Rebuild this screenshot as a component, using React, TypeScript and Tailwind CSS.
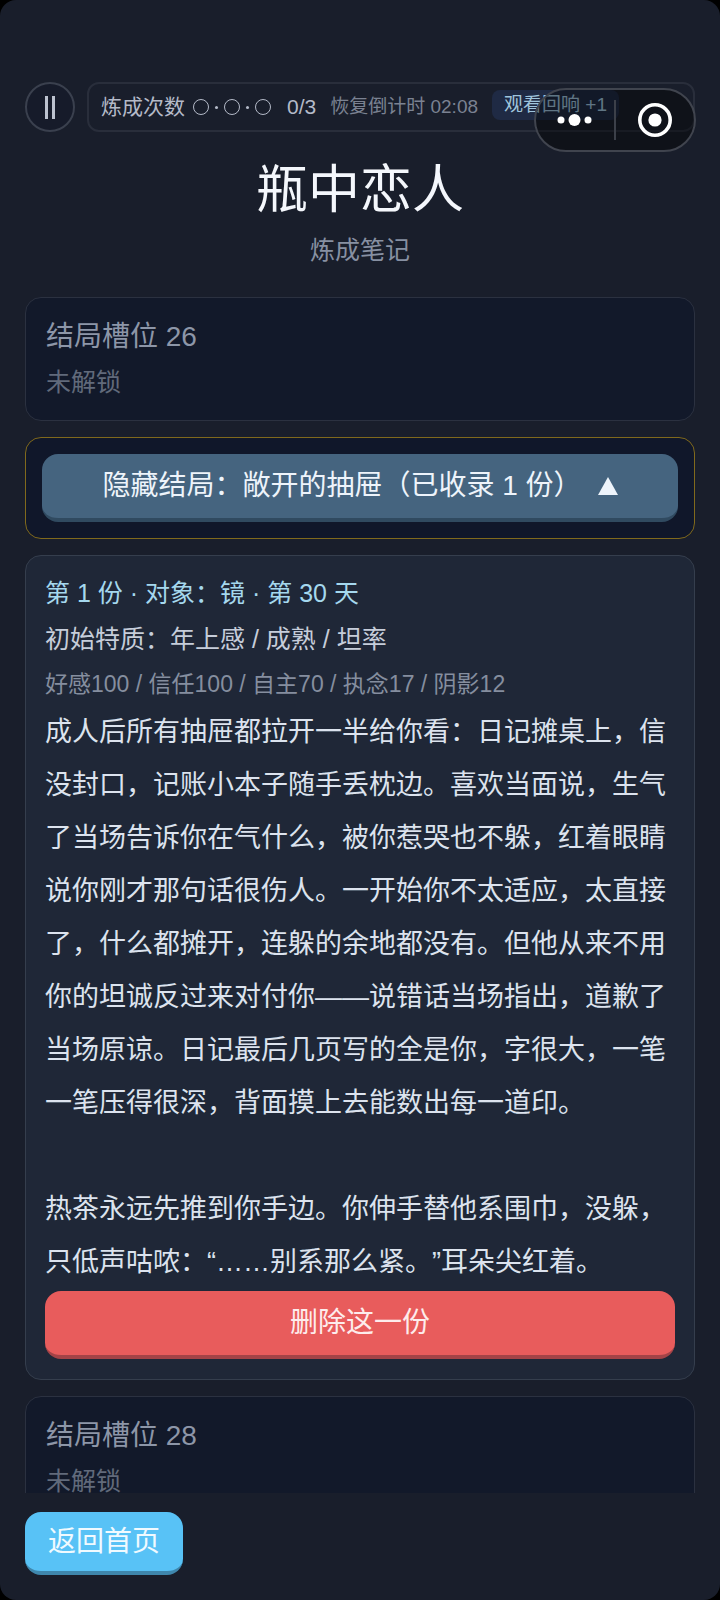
type Ending = {
  title: string;
  traits: string;
  stats: string;
  story: string;
};

const ending: Ending = {
  title: "第 1 份 · 对象：镜 · 第 30 天",
  traits: "初始特质：年上感 / 成熟 / 坦率",
  stats: "好感100 / 信任100 / 自主70 / 执念17 / 阴影12",
  story:
    "成人后所有抽屉都拉开一半给你看：日记摊桌上，信没封口，记账小本子随手丢枕边。喜欢当面说，生气了当场告诉你在气什么，被你惹哭也不躲，红着眼睛说你刚才那句话很伤人。一开始你不太适应，太直接了，什么都摊开，连躲的余地都没有。但他从来不用你的坦诚反过来对付你——说错话当场指出，道歉了当场原谅。日记最后几页写的全是你，字很大，一笔一笔压得很深，背面摸上去能数出每一道印。\n\n热茶永远先推到你手边。你伸手替他系围巾，没躲，只低声咕哝：“……别系那么紧。”耳朵尖红着。",
};

function StatusBar() {
  return (
    <div className="flex items-center gap-3 px-[25px]">
      <button
        type="button"
        aria-label="暂停"
        className="flex size-[50px] shrink-0 items-center justify-center gap-1 rounded-full border-2 border-[#3a404e] bg-[#161b2a]"
      >
        <span className="h-[23px] w-[3px] bg-[#bcc2cf]" />
        <span className="h-[23px] w-[3px] bg-[#bcc2cf]" />
      </button>
      <div className="flex h-[50px] min-w-0 flex-1 items-center overflow-hidden rounded-xl border-2 border-[#292e3b] pl-3 whitespace-nowrap">
        <span className="text-[21px] text-[#b4bac8]">炼成次数</span>
        <span className="ml-2 flex items-center gap-1.5">
          <Slot />
          <Dot />
          <Slot />
          <Dot />
          <Slot />
        </span>
        <span className="ml-4 text-[21px] text-[#b4bac8]">0/3</span>
        <span className="ml-[14px] text-[19px] text-[#7b8292]">恢复倒计时 02:08</span>
        <button
          type="button"
          className="mb-1 ml-[14px] h-[30px] rounded-lg bg-[#1f2a44] px-3 text-[19px] leading-[30px] text-[#9fc4dc]"
        >
          观看回响 +1
        </button>
      </div>
    </div>
  );
}

function Slot() {
  return <span className="size-4 rounded-full border border-[#b4bac8]" />;
}

function Dot() {
  return <span className="size-[3px] rounded-full bg-[#b4bac8]" />;
}

function Capsule() {
  return (
    <div className="absolute top-[88px] right-6 flex h-16 w-[162px] items-center rounded-full border-2 border-[#40444e] bg-black/40">
      <button type="button" aria-label="更多" className="flex h-full flex-1 items-center justify-center">
        <svg width="36" height="14" viewBox="0 0 36 14" fill="white">
          <circle cx="4" cy="7" r="3.5" />
          <circle cx="17.5" cy="7" r="6" />
          <circle cx="31" cy="7" r="3.5" />
        </svg>
      </button>
      <span className="h-10 w-0.5 bg-[#3c4049]" />
      <button type="button" aria-label="关闭" className="flex h-full flex-1 items-center justify-center">
        <svg width="34" height="34" viewBox="0 0 34 34" fill="none">
          <circle cx="17" cy="17" r="15.2" stroke="white" strokeWidth="3.6" />
          <circle cx="17" cy="17" r="6.6" fill="white" />
        </svg>
      </button>
    </div>
  );
}

function LockedSlot({ index }: { index: number }) {
  return (
    <section className="shrink-0 rounded-2xl border border-[#2b3140] bg-[#12192a] px-5 pt-4 pb-4">
      <h2 className="text-[28px] leading-[46px] text-[#8d96a8]">结局槽位 {index}</h2>
      <p className="text-[25px] leading-[44px] text-[#616a7b]">未解锁</p>
    </section>
  );
}

function EndingCard({ title, traits, stats, story }: Ending) {
  return (
    <article className="shrink-0 rounded-2xl border border-[#353e4d] bg-[#1f2737] px-[19px] pt-[14px] pb-5">
      <h2 className="text-[25px] leading-[46px] text-[#a5d8ee]">{title}</h2>
      <p className="text-[25px] leading-[46px] text-[#c6cdda]">{traits}</p>
      <p className="text-[23px] leading-[44px] text-[#858e9f]">{stats}</p>
      <p className="text-[27px] leading-[53px] whitespace-pre-line text-[#dce3ee] [text-spacing-trim:space-all]">
        {story}
      </p>
      <button
        type="button"
        className="mt-0.5 h-[68px] w-full rounded-2xl border-b-4 border-[#a34347] bg-[#e85c5c] text-[28px] text-[#fdecec]"
      >
        删除这一份
      </button>
    </article>
  );
}

export default function App() {
  return (
    <div className="h-screen bg-black font-['Liberation_Sans','Noto_Sans_CJK_SC',sans-serif]">
      <main lang="zh-CN" className="relative flex h-full flex-col overflow-hidden rounded-2xl bg-[#191e2b] pt-[82px]">
        <StatusBar />
        <Capsule />

        <header className="pt-[22px] pb-6 text-center">
          <h1 className="text-[52px] leading-[72px] text-[#f4f7fc]">瓶中恋人</h1>
          <p className="pt-px text-[25px] leading-[46px] text-[#8790a2]">炼成笔记</p>
        </header>

        <div className="flex min-h-0 flex-1 flex-col gap-4 overflow-y-auto px-[25px] [scrollbar-width:none]">
          <LockedSlot index={26} />
          <section className="shrink-0 rounded-2xl border border-[#80691c] bg-[#10172a] p-4">
            <button
              type="button"
              className="flex h-[68px] w-full items-center justify-center gap-4 rounded-2xl border-b-4 border-[#304a60] bg-[#45647f] text-[28px] text-[#eef4fb]"
            >
              <span>隐藏结局：敞开的抽屉（已收录 1 份）</span>
              <svg width="20" height="18" viewBox="0 0 20 18" fill="currentColor">
                <path d="M10 0 20 18H0z" />
              </svg>
            </button>
          </section>
          <EndingCard {...ending} />
          <LockedSlot index={28} />
        </div>

        <footer className="px-[25px] pt-[19px] pb-[25px]">
          <button
            type="button"
            className="h-[63px] rounded-2xl border-b-4 border-[#3f87ad] bg-[#58c2f6] px-[23px] text-[28px] text-[#f0faff]"
          >
            返回首页
          </button>
        </footer>
      </main>
    </div>
  );
}
